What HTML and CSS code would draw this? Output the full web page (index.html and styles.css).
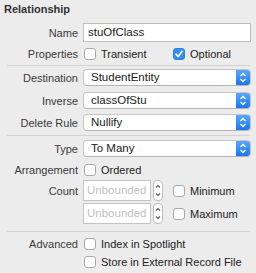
FILE: index.html
```html
<!DOCTYPE html>
<html lang="en">
<head>
    <meta charset="UTF-8">
    <title>Relationship Inspector</title>
    <link rel="stylesheet" href="styles.css">
</head>
<body>
    <div class="inspector">
        <h2 class="title">Relationship</h2>

        <div class="row row-name">
            <span class="label">Name</span>
            <div class="text-field">stuOfClass</div>
        </div>

        <div class="row row-check first">
            <span class="label">Properties</span>
            <span class="check"></span>
            <span class="check-text transient">Transient</span>
            <span class="check checked">
                <svg width="12" height="12" viewBox="0 0 12 12"><path d="M3 6.2 L5.2 8.5 L9 3.5" fill="none" stroke="#fff" stroke-width="1.8" stroke-linecap="round" stroke-linejoin="round"/></svg>
            </span>
            <span class="check-text">Optional</span>
        </div>

        <div class="separator sep-1"></div>

        <div class="row row-popup dest">
            <span class="label">Destination</span>
            <div class="popup"><span class="popup-text">StudentEntity</span><span class="popup-arrows"><svg width="8" height="11" viewBox="0 0 8 11"><path d="M1.5 4 L4 1.5 L6.5 4 M1.5 7 L4 9.5 L6.5 7" fill="none" stroke="#fff" stroke-width="1.3"/></svg></span></div>
        </div>
        <div class="row row-popup inverse">
            <span class="label">Inverse</span>
            <div class="popup"><span class="popup-text">classOfStu</span><span class="popup-arrows"><svg width="8" height="11" viewBox="0 0 8 11"><path d="M1.5 4 L4 1.5 L6.5 4 M1.5 7 L4 9.5 L6.5 7" fill="none" stroke="#fff" stroke-width="1.3"/></svg></span></div>
        </div>
        <div class="row row-popup rule">
            <span class="label">Delete Rule</span>
            <div class="popup"><span class="popup-text">Nullify</span><span class="popup-arrows"><svg width="8" height="11" viewBox="0 0 8 11"><path d="M1.5 4 L4 1.5 L6.5 4 M1.5 7 L4 9.5 L6.5 7" fill="none" stroke="#fff" stroke-width="1.3"/></svg></span></div>
        </div>

        <div class="separator sep-2"></div>

        <div class="row row-popup type">
            <span class="label">Type</span>
            <div class="popup"><span class="popup-text">To Many</span><span class="popup-arrows"><svg width="8" height="11" viewBox="0 0 8 11"><path d="M1.5 4 L4 1.5 L6.5 4 M1.5 7 L4 9.5 L6.5 7" fill="none" stroke="#fff" stroke-width="1.3"/></svg></span></div>
        </div>

        <div class="row row-check arrangement">
            <span class="label">Arrangement</span>
            <span class="check"></span>
            <span class="check-text">Ordered</span>
        </div>

        <div class="row row-count count-min">
            <span class="label">Count</span>
            <div class="num-field">Unbounded</div>
            <span class="stepper"><svg width="8" height="19" viewBox="0 0 8 19"><path d="M2 6.5 L4 4.5 L6 6.5 M2 12.5 L4 14.5 L6 12.5" fill="none" stroke="#555" stroke-width="1.1"/></svg></span>
            <span class="check"></span>
            <span class="check-text">Minimum</span>
        </div>
        <div class="row row-count count-max">
            <span class="label"></span>
            <div class="num-field">Unbounded</div>
            <span class="stepper"><svg width="8" height="19" viewBox="0 0 8 19"><path d="M2 6.5 L4 4.5 L6 6.5 M2 12.5 L4 14.5 L6 12.5" fill="none" stroke="#555" stroke-width="1.1"/></svg></span>
            <span class="check"></span>
            <span class="check-text">Maximum</span>
        </div>

        <div class="separator sep-3"></div>

        <div class="row row-check advanced">
            <span class="label">Advanced</span>
            <span class="check"></span>
            <span class="check-text">Index in Spotlight</span>
        </div>
        <div class="row row-check external">
            <span class="label"></span>
            <span class="check"></span>
            <span class="check-text">Store in External Record File</span>
        </div>
    </div>
</body>
</html>
```

FILE: styles.css
```css
body {
    margin: 0;
    background-color: #ececec;
    font-family: 'Liberation Sans', Arial, sans-serif;
    font-size: 11px;
    color: #2b2b2b;
}

.inspector {
    width: 256px;
    height: 273px;
    overflow: hidden;
}

.title {
    margin: 0;
    padding: 2px 0 0 4px;
    font-size: 11px;
    line-height: 14px;
    font-weight: bold;
    color: #333;
}

.row {
    display: flex;
    align-items: center;
}

.label {
    width: 78px;
    flex-shrink: 0;
    margin-right: 5px;
    text-align: right;
    color: #3a3a3a;
    line-height: 14px;
}

/* text field */
.row-name {
    margin-top: 7px;
    height: 19px;
}

.text-field {
    box-sizing: border-box;
    width: 168px;
    height: 19px;
    padding: 0 4px;
    background-color: #fff;
    border: 1px solid #bdbdbd;
    font-size: 11.5px;
    line-height: 17px;
    color: #1a1a1a;
}

/* checkboxes */
.row-check {
    height: 14px;
}

.first {
    margin-top: 5px;
}

.arrangement {
    margin-top: 6px;
}

.advanced {
    margin-top: 5px;
}

.external {
    margin-top: 4px;
}

.check {
    box-sizing: border-box;
    width: 12px;
    height: 12px;
    flex-shrink: 0;
    margin-left: 1px;
    background-color: #fff;
    border: 1px solid #a9a9a9;
    border-radius: 3px;
}

.check.checked {
    margin-left: 0;
    background-color: #2f8ff7;
    border-color: #2a82e8;
    display: flex;
}

.check.checked svg {
    margin: -1px;
}

.check-text {
    margin-left: 5px;
    line-height: 14px;
    color: #222;
    white-space: nowrap;
}

.transient {
    width: 72px;
}

/* separators */
.separator {
    height: 1px;
    margin-left: 7px;
    width: 243px;
    background-color: #d3d3d3;
}

.sep-1 {
    margin-top: 4px;
}

.sep-2 {
    margin-top: 4px;
}

.sep-3 {
    margin-top: 7px;
}

/* popup buttons */
.row-popup {
    height: 17px;
}

.dest {
    margin-top: 3px;
}

.inverse {
    margin-top: 6px;
}

.rule {
    margin-top: 5px;
}

.type {
    margin-top: 4px;
}

.popup {
    box-sizing: border-box;
    width: 168px;
    height: 17px;
    display: flex;
    background-color: #fff;
    border: 1px solid #c6c6c6;
    border-bottom-color: #b4b4b4;
    border-radius: 4px;
    overflow: hidden;
}

.popup-text {
    flex: 1;
    padding-left: 7px;
    font-size: 11.5px;
    line-height: 15px;
    color: #1a1a1a;
}

.popup-arrows {
    width: 14px;
    display: flex;
    align-items: center;
    justify-content: center;
    background: linear-gradient(#5aa8fb, #1a76f2);
}

/* count fields */
.row-count {
    height: 21px;
}

.count-min {
    margin-top: 3px;
}

.count-max {
    margin-top: 2px;
}

.num-field {
    box-sizing: border-box;
    width: 68px;
    height: 21px;
    padding-left: 3px;
    background-color: #fff;
    border: 1px solid #c4c4c4;
    font-size: 11.5px;
    line-height: 19px;
    color: #c2c2c2;
}

.stepper {
    box-sizing: border-box;
    width: 10px;
    height: 21px;
    margin-left: 2px;
    margin-right: 9px;
    display: flex;
    justify-content: center;
    align-items: center;
    background-color: #fff;
    border: 1px solid #bdbdbd;
    border-radius: 4px;
}
```
